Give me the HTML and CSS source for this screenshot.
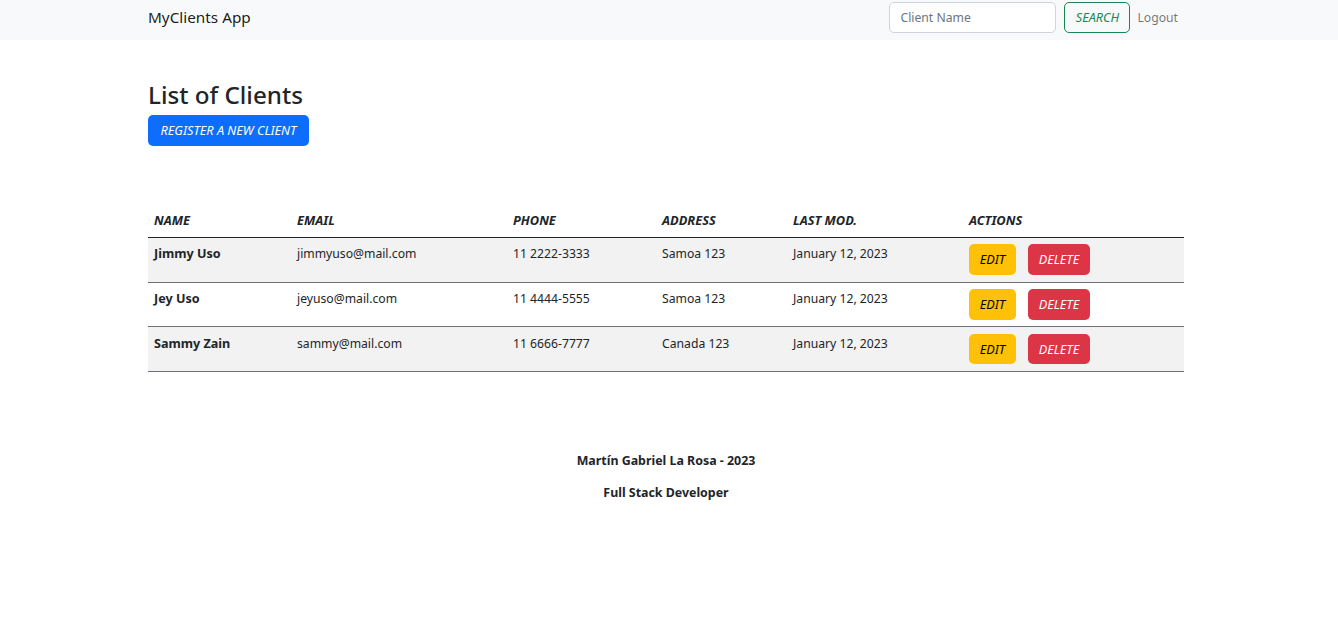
FILE: index.html
```html
<!DOCTYPE html>
<html lang="en">
<head>
<meta charset="utf-8">
<title>MyClients App</title>
<link rel="stylesheet" href="styles.css">
</head>
<body>
<nav class="navbar">
  <div class="wrap nav-inner">
    <a class="brand" href="#">MyClients App</a>
    <form class="search">
      <input class="search-input" type="text" placeholder="Client Name">
      <button class="btn btn-outline-success" type="button">SEARCH</button>
      <a class="logout" href="#">Logout</a>
    </form>
  </div>
</nav>
<main class="wrap main">
  <h2 class="title">List of Clients</h2>
  <a class="btn btn-primary" href="#">REGISTER A NEW CLIENT</a>
  <table class="table">
    <colgroup>
      <col class="c-name"><col class="c-email"><col class="c-phone"><col class="c-address"><col class="c-mod"><col class="c-actions">
    </colgroup>
    <thead>
      <tr><th>Name</th><th>Email</th><th>Phone</th><th>Address</th><th>Last Mod.</th><th>Actions</th></tr>
    </thead>
    <tbody>
      <tr class="striped">
        <th>Jimmy Uso</th><td>jimmyuso@mail.com</td><td>11 2222-3333</td><td>Samoa 123</td><td>January 12, 2023</td>
        <td><div class="actions"><a class="btn btn-warning" href="#">EDIT</a><a class="btn btn-danger" href="#">DELETE</a></div></td>
      </tr>
      <tr>
        <th>Jey Uso</th><td>jeyuso@mail.com</td><td>11 4444-5555</td><td>Samoa 123</td><td>January 12, 2023</td>
        <td><div class="actions"><a class="btn btn-warning" href="#">EDIT</a><a class="btn btn-danger" href="#">DELETE</a></div></td>
      </tr>
      <tr class="striped">
        <th>Sammy Zain</th><td>sammy@mail.com</td><td>11 6666-7777</td><td>Canada 123</td><td>January 12, 2023</td>
        <td><div class="actions"><a class="btn btn-warning" href="#">EDIT</a><a class="btn btn-danger" href="#">DELETE</a></div></td>
      </tr>
    </tbody>
  </table>
</main>
<footer class="footer">
  <p>Martín Gabriel La Rosa - 2023</p>
  <p>Full Stack Developer</p>
</footer>
</body>
</html>
```

FILE: styles.css
```css
* { box-sizing: border-box; }
html, body { margin: 0; padding: 0; }
body {
  font-family: "Noto Sans", "Open Sans", sans-serif;
  font-size: 12.2px;
  line-height: 19.2px;
  color: #212529;
  background: #fff;
}
a { text-decoration: none; }
.wrap { width: 1036px; margin-left: 148px; }

.navbar { background: #f8f9fa; height: 40px; }
.nav-inner { display: flex; justify-content: space-between; align-items: flex-start; padding-top: 2px; }
.brand { font-size: 15.3px; color: rgba(0,0,0,.9); line-height: 31px; }
.search { display: flex; align-items: center; margin: 0 6px 0 0; }
.search-input {
  width: 167px; height: 31px;
  border: 1px solid #ced4da; border-radius: 5px;
  padding: 0 10px; font: inherit; font-size: 12.2px; color: #212529;
  margin-right: 8px;
}
.search-input::placeholder { color: #6c757d; }
.logout { color: rgba(0,0,0,.55); margin-left: 7px; }

.btn {
  display: inline-flex; align-items: center; justify-content: center;
  height: 31px; padding: 0 8px; border-radius: 5px;
  font-style: italic; font-size: 12.7px; font-family: inherit;
  border: 1px solid transparent; cursor: pointer; line-height: 1;
}
.btn-outline-success { background: transparent; border-color: #198754; color: #198754; width: 66px; }
.btn-primary { background: #0d6efd; color: #fff; width: 161px; }
.btn-warning { background: #ffc107; color: #000; width: 47px; height: 30.4px; }
.btn-danger { background: #dc3545; color: #fff; width: 62px; height: 30.4px; }

.main { padding-top: 40px; }
.title { margin: 0 0 6px; font-size: 24.2px; font-weight: 500; line-height: 1.2; }

.table { width: 1036px; border-collapse: collapse; margin-top: 58px; table-layout: fixed; }
.c-name { width: 143px; } .c-email { width: 216px; } .c-phone { width: 149px; }
.c-address { width: 131px; } .c-mod { width: 176px; } .c-actions { width: 221px; }
.table th, .table td { padding: 6.6px 6px 6.8px; text-align: left; vertical-align: top; }
.table thead th { font-style: italic; font-weight: 700; font-size: 12.8px; text-transform: uppercase; border-bottom: 1.5px solid #212529; padding-bottom: 7px; }
.table tbody tr { border-bottom: 1px solid #6c7078; }
.table tbody th { font-weight: 700; font-size: 12.6px; }
.table tbody tr.striped { background: #f2f2f2; }
.actions { display: flex; gap: 12px; }

.footer { text-align: center; font-weight: 700; font-size: 12.4px; margin-top: 79px; padding-right: 6px; }
.footer p { margin: 0 0 12.8px; }
```
